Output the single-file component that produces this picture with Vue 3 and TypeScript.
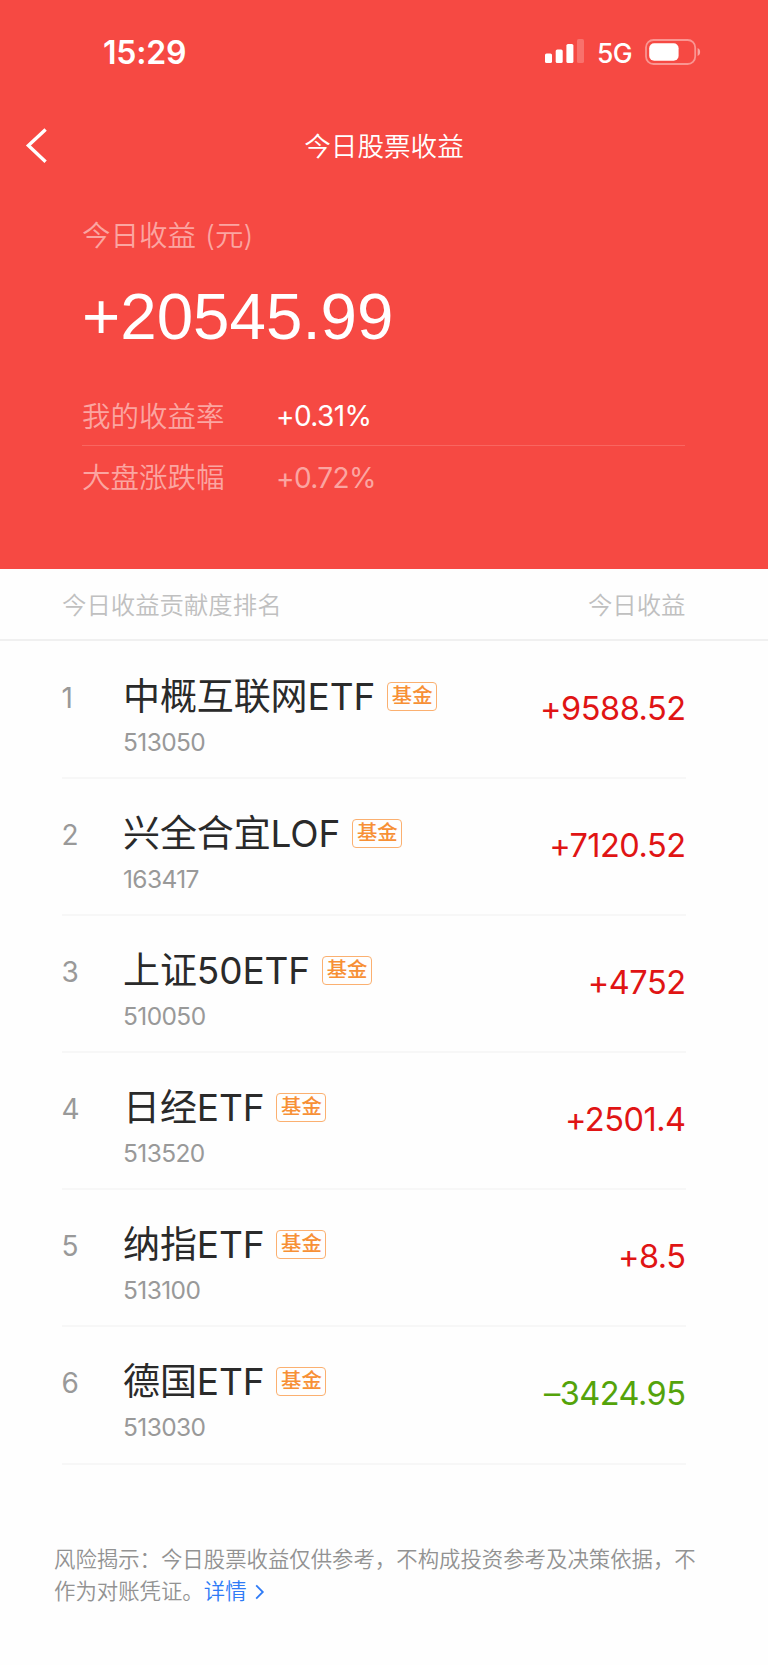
<script setup lang="ts">
interface Holding {
  rank: number
  name: string
  code: string
  profit: string
}

const holdings: Holding[] = [
  { rank: 1, name: '中概互联网ETF', code: '513050', profit: '+9588.52' },
  { rank: 2, name: '兴全合宜LOF', code: '163417', profit: '+7120.52' },
  { rank: 3, name: '上证50ETF', code: '510050', profit: '+4752' },
  { rank: 4, name: '日经ETF', code: '513520', profit: '+2501.4' },
  { rank: 5, name: '纳指ETF', code: '513100', profit: '+8.5' },
  { rank: 6, name: '德国ETF', code: '513030', profit: '–3424.95' },
]

const isLoss = (h: Holding): boolean => !h.profit.startsWith('+')
</script>

<template>
  <main class="page">
    <header class="hero">
      <div class="status">
        <span class="clock">15:29</span>
        <div class="indicators">
          <svg class="signal" width="40" height="26" viewBox="0 0 40 26" fill="#fff">
            <rect x="0" y="14.5" width="7" height="9.5" rx="1.6" />
            <rect x="10.7" y="10.5" width="7" height="13.5" rx="1.6" />
            <rect x="21.4" y="5" width="7" height="19" rx="1.6" />
            <rect x="32" y="0" width="7" height="24" rx="1.6" opacity="0.22" />
          </svg>
          <span class="network">5G</span>
          <svg class="battery" width="56" height="27" viewBox="0 0 56 27">
            <rect x="1" y="1" width="49.2" height="24" rx="7.6" fill="none" stroke="#fff" stroke-opacity="0.42" stroke-width="1.8" />
            <rect x="4.2" y="4.2" width="29.4" height="17.6" rx="5" fill="#fff" />
            <path d="M52.6 9v8c3.4-1.2 3.4-6.8 0-8z" fill="#fff" fill-opacity="0.5" />
          </svg>
        </div>
      </div>

      <nav class="nav">
        <svg class="back" width="24" height="38" viewBox="0 0 24 38" fill="none" stroke="#fff" stroke-width="3.4">
          <path d="M21.6 2.4 4.4 18.6 21.6 34.8" />
        </svg>
        <h1 class="title">今日股票收益</h1>
      </nav>

      <section class="summary">
        <div class="summary-label">今日收益<span class="unit">(元)</span></div>
        <div class="total">+20545.99</div>
        <div class="rate">
          <span class="rate-name">我的收益率</span>
          <span class="rate-value strong">+0.31%</span>
        </div>
        <div class="rate market">
          <span class="rate-name">大盘涨跌幅</span>
          <span class="rate-value">+0.72%</span>
        </div>
      </section>
    </header>

    <div class="list-head">
      <span>今日收益贡献度排名</span>
      <span>今日收益</span>
    </div>

    <ul class="list">
      <li v-for="h in holdings" :key="h.code" class="row">
        <span class="rank">{{ h.rank }}</span>
        <div class="fund">
          <div class="fund-top">
            <span class="name">{{ h.name }}</span>
            <span class="tag">基金</span>
          </div>
          <div class="code">{{ h.code }}</div>
        </div>
        <span class="profit" :class="{ loss: isLoss(h) }">{{ h.profit }}</span>
      </li>
    </ul>

    <footer class="note">
      风险揭示：今日股票收益仅供参考，不构成投资参考及决策依据，不<br />作为对账凭证。<a class="more">详情<svg class="chevron" width="10" height="16" viewBox="0 0 10 16" fill="none" stroke="#2f7bf6" stroke-width="1.8"><path d="M1.2 1.4 7.8 8 1.2 14.6" /></svg></a>
    </footer>
  </main>
</template>

<style>
body {
  margin: 0;
  background: #fefefe;
}
</style>

<style scoped>
.page {
  width: 768px;
  height: 1665px;
  overflow: hidden;
  background: #fefefe;
  font-family: Inter, "Noto Sans CJK SC", sans-serif;
  font-weight: 350;
}

.hero {
  box-sizing: border-box;
  height: 568.5px;
  background: #f64943;
  color: #fff;
}

.status {
  display: flex;
  justify-content: space-between;
  align-items: center;
  height: 104px;
  padding: 0 67px 0 103px;
}

.clock {
  padding-top: 2px;
  font-size: 32px;
  font-weight: 600;
  line-height: 40px;
  letter-spacing: -0.2px;
}

.indicators {
  display: flex;
  align-items: center;
}

.network {
  width: 37px;
  margin: 2px 11px 0 12px;
  font-size: 26.5px;
  font-weight: 450;
  line-height: 30px;
  letter-spacing: -0.6px;
}

.nav {
  display: grid;
  grid-template-columns: 24px 1fr 24px;
  align-items: center;
  height: 84px;
  padding: 0 24px;
}

.title {
  margin: 0;
  font-size: 26.6px;
  font-weight: 350;
  line-height: 40px;
  text-align: center;
}

.summary {
  padding: 28px 83px 0 82px;
}

.summary-label {
  height: 40px;
  font-size: 28.5px;
  line-height: 40px;
  color: #fba5a1;
}

.unit {
  margin-left: 9px;
}

.total {
  height: 76px;
  margin-top: 23px;
  font-family: "Liberation Sans", Arial, sans-serif;
  font-size: 65.5px;
  line-height: 76px;
}

.rate {
  box-sizing: border-box;
  display: flex;
  align-items: center;
  height: 61px;
  margin-top: 30px;
  padding-top: 2px;
  border-bottom: 1px solid #f96660;
  font-size: 28.5px;
  line-height: 40px;
  color: #fba5a1;
}

.rate.market {
  margin-top: 0;
  border-bottom: 0;
}

.rate-name {
  width: 194px;
  padding-top: 1px;
}

.rate-value {
  font-size: 28px;
  font-weight: 400;
  letter-spacing: -0.6px;
}

.strong {
  color: #fff;
}

.list-head {
  box-sizing: border-box;
  display: flex;
  justify-content: space-between;
  height: 72px;
  padding: 17px 82.5px 0 62px;
  border-bottom: 2px solid #f0f0f0;
  font-size: 24.4px;
  line-height: 38px;
  color: #c0c0c0;
}

.list {
  margin: 0;
  padding: 1.5px 82.5px 0 61.5px;
  list-style: none;
}

.row {
  box-sizing: border-box;
  display: flex;
  height: 137.1px;
  border-bottom: 2px solid #f7f7f7;
}

.rank {
  width: 61.5px;
  padding-top: 36px;
  font-size: 28px;
  font-weight: 400;
  line-height: 40px;
  color: #999;
}

.fund {
  flex: 1;
  padding-top: 28px;
}

.fund-top {
  display: flex;
  align-items: center;
  height: 52px;
}

.name {
  padding-top: 1px;
  font-size: 37px;
  font-weight: 400;
  line-height: 52px;
  letter-spacing: -0.1px;
  color: #2a2a2a;
}

.tag {
  box-sizing: border-box;
  width: 50px;
  height: 29px;
  margin-left: 12px;
  border: 1.5px solid #fbb070;
  border-radius: 4px;
  font-size: 20.4px;
  font-weight: 500;
  line-height: 26px;
  text-align: center;
  color: #f79035;
}

.code {
  margin-top: 4px;
  font-size: 24.5px;
  font-weight: 400;
  line-height: 32px;
  letter-spacing: -0.6px;
  color: #999;
}

.profit {
  padding-top: 46px;
  font-size: 32.5px;
  font-weight: 400;
  line-height: 42px;
  letter-spacing: -0.5px;
  color: #e01414;
}

.profit.loss {
  color: #54a30a;
}

.note {
  padding: 78.5px 0 0 54px;
  font-size: 21.4px;
  line-height: 32.4px;
  white-space: nowrap;
  color: #929292;
}

.more {
  color: #2f7bf6;
}

.chevron {
  margin-left: 8px;
  vertical-align: -1px;
}
</style>
